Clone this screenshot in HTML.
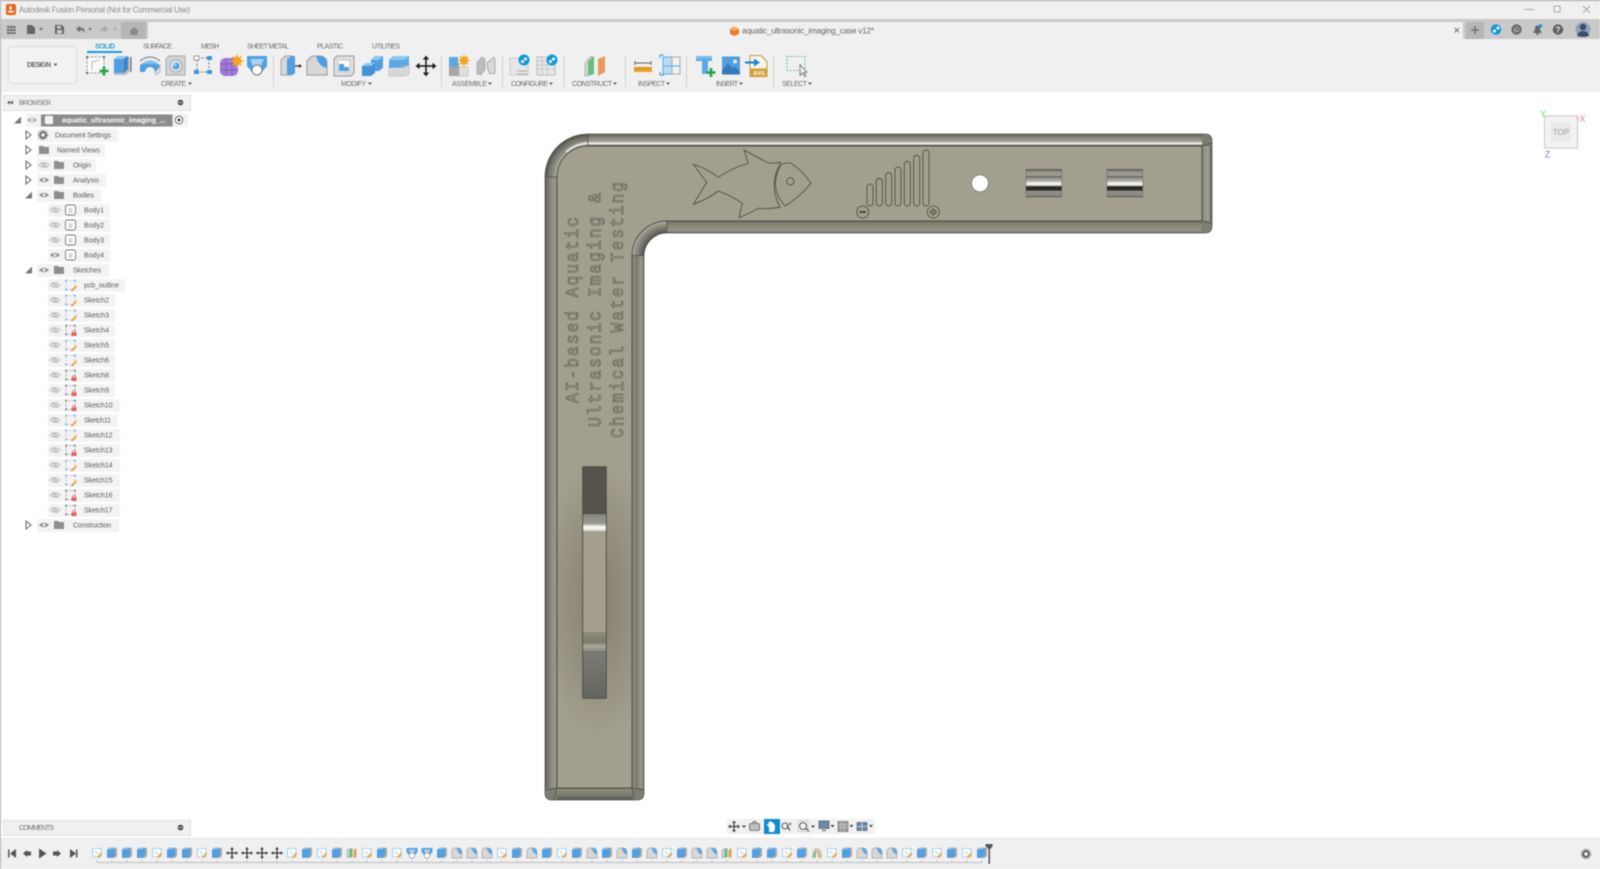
<!DOCTYPE html>
<html><head><meta charset="utf-8"><title>Autodesk Fusion</title>
<style>
html,body{margin:0;padding:0;background:#fff;width:1600px;height:869px;overflow:hidden}
svg{display:block;filter:blur(.45px);font-family:"Liberation Sans",sans-serif}
.t{font-size:7px;fill:#5c5c5c}
.l{font-size:7px;fill:#6e6e6e}
.m{font-family:"Liberation Mono",monospace;font-size:16.5px;fill:none;stroke:#504f47;stroke-width:.5}
</style></head><body>
<svg width="1600" height="869" viewBox="0 0 1600 869" xmlns="http://www.w3.org/2000/svg">
<defs>
<g id="eo" fill="none" stroke="#bcbcbc" stroke-width=".9"><path d="M-5 0Q0-4.5 5 0Q0 4.5-5 0Z"/><circle r="1.6"/><path d="M-3-3L3 3"/></g>
<g id="e1"><path d="M-5 0Q0-4.5 5 0Q0 4.5-5 0Z" fill="#8c8c8c"/><circle r="1.7" fill="#dcdcdc"/></g>
<path id="fo" d="M-5-4H-1L0-3H5V4H-5Z" fill="#8e8e8e"/>
<g id="bd"><rect x="-5" y="-5" width="10" height="10" rx="2" fill="#fff" stroke="#777" stroke-width=".9"/><rect x="-2" y="-2" width="4" height="5" fill="#d8d8d8"/></g>
<g id="sp"><rect x="-4.5" y="-4.5" width="9" height="9" fill="none" stroke="#a9b4bd" stroke-width=".6" stroke-dasharray="2 1"/><g fill="#4ea4ea"><rect x="-5.2" y="-5.2" width="1.5" height="1.5"/><rect x="3.7" y="-5.2" width="1.5" height="1.5"/><rect x="-5.2" y="3.700" width="1.5" height="1.5"/></g><path d="M2 5L6 1" stroke="#f0a020" stroke-width="1.6"/><path d="M2 5L1 6" stroke="#e04020" stroke-width="1"/></g>
<g id="sl"><rect x="-4.5" y="-4.5" width="9" height="9" fill="none" stroke="#8a8a8a" stroke-width=".6" stroke-dasharray="2 1"/><g fill="#666"><rect x="-5.2" y="-5.2" width="1.5" height="1.5"/><rect x="3.7" y="-5.2" width="1.5" height="1.5"/><rect x="-5.2" y="3.700" width="1.5" height="1.5"/></g><rect x="1" y="2.500" width="5" height="3.500" fill="#dc6460"/><path d="M2 2.500V1.500Q3.500-.5 5 1.500V2.500" fill="none" stroke="#dc6460" stroke-width=".8"/></g>
<path id="tc" d="M-2-4L3 0L-2 4Z" fill="#fff" stroke="#666" stroke-width="1"/>
<path id="to" d="M-3.500 3.500H3.500V-3.500Z" fill="#7a7a7a"/>
<!-- timeline icons -->
<g id="k"><rect x="-4.500" y="-4.500" width="8.500" height="8.500" fill="#fbfdff" stroke="#6fb4e8" stroke-width=".8" stroke-dasharray="2 .8"/><path d="M-2-2L1 1M-2 2H-1" stroke="#9ab4c8" stroke-width=".6"/><path d="M.5 4.500L4.500 .5" stroke="#f0a020" stroke-width="1.700"/></g>
<g id="x"><path d="M-5-2.500L-2.500-5H5V3L2.500 5H-5Z" fill="#a8a8a8"/><path d="M-5-3.500L-2.500-5.500H3V2.500L.5 4.500H-5Z" fill="#4f9fe2"/><path d="M-5-3.500L-2.500-5.500H3L.5-3.500Z" fill="#86c0ee"/></g>
<g id="f"><path d="M-5 5V-3L-3-5H1Q5-5 5 0V5Z" fill="#d8d8d8" stroke="#a2a2a2" stroke-width=".7"/><path d="M-.5-5H1Q5-5 5 0V1.500Q1.500 1.500-.5-5Z" fill="#5aa6e2"/></g>
<g id="m" fill="#333"><path d="M-.6-4H.6V4H-.6Z"/><path d="M-4-.6H4V.6H-4Z"/><path d="M0-6L-1.800-3.800H1.800Z"/><path d="M0 6L-1.800 3.800H1.800Z"/><path d="M-6 0L-3.800-1.800V1.800Z"/><path d="M6 0L3.800-1.800V1.800Z"/></g>
<g id="c"><path d="M-5-3L-1-5V3L-5 5Z" fill="#d0d0d0" stroke="#999" stroke-width=".5"/><path d="M-2.500-3L.5-5V4L-2.500 5Z" fill="#5fbf7f"/><path d="M1.500-3L4.500-5V4L1.500 5Z" fill="#e89a62"/></g>
<g id="o"><path d="M-5.500-5H5.500V-1L2 3H-2L-5.500-1Z" fill="#4f9fe2"/><path d="M-3.500-3.500H3.500L2 0H-2Z" fill="#a8d2f2"/><circle cy="2.500" r="2.800" fill="#fff" stroke="#8a8a8a" stroke-width=".7"/></g>
<g id="r"><path d="M-5 2Q-4-5 0-5Q4-5 5 2L3 4H1Q1 0 0 0Q-1 0-1 4H-3Z" fill="#d0c8b8"/><path d="M-5 4L-1-4V5H-5Z" fill="#6fbf86" opacity=".8"/><path d="M5 4L1-4V5H5Z" fill="#e8a070" opacity=".8"/></g>
<!-- model -->
<linearGradient id="gt" x1="0" y1="134" x2="0" y2="146" gradientUnits="userSpaceOnUse"><stop offset="0" stop-color="#4f4f49"/><stop offset=".12" stop-color="#706f67"/><stop offset=".4" stop-color="#8f8e84"/><stop offset=".66" stop-color="#a8a79d"/><stop offset=".74" stop-color="#f0efe8"/><stop offset=".85" stop-color="#ecebe4"/><stop offset=".92" stop-color="#77766c"/><stop offset="1" stop-color="#4c4b44"/></linearGradient>
<linearGradient id="gl" x1="545" y1="0" x2="557" y2="0" gradientUnits="userSpaceOnUse"><stop offset="0" stop-color="#565550"/><stop offset=".15" stop-color="#706f66"/><stop offset=".55" stop-color="#8e8d84"/><stop offset=".92" stop-color="#9c9b8e"/><stop offset="1" stop-color="#4c4b44"/></linearGradient>
<linearGradient id="gr" x1="632" y1="0" x2="644" y2="0" gradientUnits="userSpaceOnUse"><stop offset="0" stop-color="#4c4b44"/><stop offset=".08" stop-color="#8e8d80"/><stop offset=".42" stop-color="#7a796f"/><stop offset=".72" stop-color="#9a998f"/><stop offset=".92" stop-color="#8a897f"/><stop offset="1" stop-color="#55544c"/></linearGradient>
<linearGradient id="gb" x1="0" y1="221" x2="0" y2="233" gradientUnits="userSpaceOnUse"><stop offset="0" stop-color="#4c4b44"/><stop offset=".1" stop-color="#7d7a6d"/><stop offset=".45" stop-color="#8b8a7e"/><stop offset=".85" stop-color="#949388"/><stop offset="1" stop-color="#55544c"/></linearGradient>
<linearGradient id="ge" x1="1202" y1="0" x2="1212" y2="0" gradientUnits="userSpaceOnUse"><stop offset="0" stop-color="#4c4b44"/><stop offset=".1" stop-color="#8f8e84"/><stop offset=".65" stop-color="#9e9d94"/><stop offset=".9" stop-color="#6a6960"/><stop offset="1" stop-color="#4e4d46"/></linearGradient>
<linearGradient id="gf" x1="0" y1="788" x2="0" y2="800" gradientUnits="userSpaceOnUse"><stop offset="0" stop-color="#4c4b44"/><stop offset=".1" stop-color="#8c8b80"/><stop offset=".6" stop-color="#7c7b72"/><stop offset="1" stop-color="#55544c"/></linearGradient>
<linearGradient id="gs"  x1="0" y1="0" x2="0" y2="1"><stop offset="0" stop-color="#5c5b54"/><stop offset=".06" stop-color="#7d7c74"/><stop offset=".1" stop-color="#9a9990"/><stop offset=".24" stop-color="#9c9b92"/><stop offset=".27" stop-color="#55544d"/><stop offset=".3" stop-color="#8f8e86"/><stop offset=".42" stop-color="#aeada5"/><stop offset=".5" stop-color="#f8f8f3"/><stop offset=".58" stop-color="#e4e4dc"/><stop offset=".62" stop-color="#45443e"/><stop offset=".64" stop-color="#25241f"/><stop offset=".76" stop-color="#2f2e29"/><stop offset=".78" stop-color="#8f8e86"/><stop offset=".95" stop-color="#8a8981"/><stop offset="1" stop-color="#55544d"/></linearGradient>
<linearGradient id="s1" x1="0" y1="513" x2="0" y2="534" gradientUnits="userSpaceOnUse"><stop offset="0" stop-color="#36352f"/><stop offset=".08" stop-color="#888780"/><stop offset=".5" stop-color="#9a9992"/><stop offset=".66" stop-color="#fdfdf8"/><stop offset=".8" stop-color="#e8e8e0"/><stop offset=".9" stop-color="#9f9e90"/><stop offset="1" stop-color="#a39e8d"/></linearGradient>
<linearGradient id="s2" x1="0" y1="632" x2="0" y2="652" gradientUnits="userSpaceOnUse"><stop offset="0" stop-color="#908c7c"/><stop offset=".5" stop-color="#7c7969"/><stop offset=".7" stop-color="#a9a89d"/><stop offset=".95" stop-color="#8d8c84"/><stop offset="1" stop-color="#55544c"/></linearGradient>
<linearGradient id="s3" x1="0" y1="652" x2="0" y2="698" gradientUnits="userSpaceOnUse"><stop offset="0" stop-color="#7c7b76"/><stop offset="1" stop-color="#64645e"/></linearGradient>
<radialGradient id="sh" cx="598" cy="600" r="1" gradientUnits="userSpaceOnUse" gradientTransform="translate(598 600) scale(60 140) translate(-598 -600)"><stop offset="0" stop-color="#6e6958" stop-opacity=".6"/><stop offset="1" stop-color="#6e6958" stop-opacity="0"/></radialGradient>
<clipPath id="out"><path d="M552 800Q545 800 545 793V177A43 43 0 0 1 588 134H1205Q1212 134 1212 141V226Q1212 233 1205 233H667A23 23 0 0 0 644 256V793Q644 800 637 800Z"/></clipPath>
<path id="face" d="M557 788V177A31 31 0 0 1 588 146H1202V221H667A35 35 0 0 0 632 256V788Z"/>
</defs>

<!-- chrome -->
<rect width="1600" height="869" fill="#fff"/>
<rect width="1600" height="20" fill="#f0f0f0"/>
<rect width="1600" height="1" fill="#a2a2a2"/>
<rect y="19" width="1600" height="20" fill="#c9c9c9"/>
<rect x="148" y="22" width="1315" height="17" fill="#f0f0f0"/>
<rect x="121" y="22" width="25" height="17" fill="#b6b6b6"/>
<rect y="39" width="1600" height="53" fill="#f0f0f0"/>
<rect x="0" width="1" height="869" fill="#aaa"/>
<rect x="6" y="4" width="10" height="11" rx="2" fill="#e8641b"/><rect x="9.500" y="6" width="2" height="4" fill="#fff"/><rect x="8" y="11" width="6" height="1.500" fill="#fff"/>
<text x="19" y="12.500" font-size="8" fill="#8c8c8c" textLength="171">Autodesk Fusion Personal (Not for Commercial Use)</text>
<path d="M1524 9.500H1534" stroke="#a8a8a8"/><rect x="1554" y="6" width="6" height="6" fill="none" stroke="#a8a8a8"/><path d="M1583 6L1590 13M1590 6L1583 13" stroke="#a8a8a8"/>
<!-- QAT -->
<g fill="#666"><rect x="7" y="26" width="2.500" height="2"/><rect x="10" y="26" width="2.500" height="2"/><rect x="13" y="26" width="2.500" height="2"/><rect x="7" y="29" width="2.500" height="2"/><rect x="10" y="29" width="2.500" height="2"/><rect x="13" y="29" width="2.500" height="2"/><rect x="7" y="32" width="2.500" height="2"/><rect x="10" y="32" width="2.500" height="2"/><rect x="13" y="32" width="2.500" height="2"/></g>
<path d="M27 25H32L35 28V34H27Z" fill="#666"/><path d="M39 28H43L41 30.500Z" fill="#666"/>
<path d="M55 25H62L64 27V34H55Z" fill="#666"/><rect x="57" y="26" width="4" height="2.500" fill="#ccc"/><rect x="57" y="30" width="5" height="3.500" fill="#ccc"/>
<path d="M76 29L80 25.500V27.500Q85 27.500 85 33Q83 30 80 30.500V32.500Z" fill="#777"/><path d="M88 28H92L90 30.500Z" fill="#777"/>
<path d="M108 29L104 25.500V27.500Q100 27.500 100 33Q102 30 104 30.500V32.500Z" fill="#aaa"/><path d="M113 28H117L115 30.500Z" fill="#aaa"/>
<path d="M134 27L129 31.500H130.500V35H137.500V31.500H139Z" fill="#888"/>
<!-- doc title -->
<path d="M734 26.500L739 29V34L734 36L730 34V29Z" fill="#ec7a2d"/><path d="M730 29L734 26.500L739 29L734 31Z" fill="#f5a66b"/>
<text x="742" y="33.500" font-size="8.200" fill="#666" textLength="132">aquatic_ultrasonic_imaging_case v12*</text>
<path d="M1454.500 28L1459 32.500M1459 28L1454.500 32.500" stroke="#777" stroke-width="1"/>
<rect x="1466" y="22" width="18" height="17" fill="#b6b6b6"/><path d="M1471 30H1479M1475 26V34" stroke="#707070" stroke-width="1.500"/>
<circle cx="1496" cy="29.500" r="5.200" fill="#0f98d8"/><circle cx="1494.500" cy="31" r="1.500" fill="#fff"/><circle cx="1498" cy="28" r="1.500" fill="#fff"/>
<circle cx="1516.500" cy="29.500" r="5.200" fill="#6a6a6a"/><circle cx="1516.500" cy="29.500" r="3" fill="#9a9a9a"/><path d="M1516.500 27.500V29.500H1518.500" stroke="#444" fill="none" stroke-width=".8"/>
<path d="M1533 33Q1535 31 1535 28Q1535 25.500 1537.500 25.500Q1540 25.500 1540 28Q1540 31 1542 33Z" fill="#666"/><circle cx="1537.500" cy="34" r="1.200" fill="#666"/><circle cx="1540.500" cy="26" r="1.700" fill="#0f98d8"/>
<circle cx="1558" cy="29.500" r="5.200" fill="#606060"/><text x="1558" y="32.500" font-size="8" font-weight="bold" fill="#eee" text-anchor="middle">?</text>
<circle cx="1583" cy="29.500" r="7.500" fill="#8fa3bb"/><circle cx="1583" cy="27" r="3.200" fill="#3f4c62"/><path d="M1577 36Q1578 31 1583 31Q1588 31 1589 36Q1583 38 1577 36Z" fill="#3f4c62"/>

<!-- design button & tabs -->
<rect x="8.500" y="46.500" width="68" height="37" rx="3" fill="#f2f2f2" stroke="#dcdcdc"/>
<text x="27" y="67" font-size="7" font-weight="bold" fill="#666" textLength="24">DESIGN</text><path d="M53.500 63.500H57.500L55.500 66Z" fill="#555"/>
<text x="95" y="48.500" font-size="7" font-weight="bold" fill="#2c9fd9" textLength="20">SOLID</text>
<rect x="87" y="51" width="35" height="2" fill="#1a9ad6"/>
<text class="l" x="143" y="48.500" textLength="29">SURFACE</text>
<text class="l" x="201" y="48.500" textLength="18">MESH</text>
<text class="l" x="247" y="48.500" textLength="42">SHEET METAL</text>
<text class="l" x="317" y="48.500" textLength="26">PLASTIC</text>
<text class="l" x="372" y="48.500" textLength="28">UTILITIES</text>
<!-- labels -->
<text class="l" x="161" y="86" textLength="25">CREATE</text><path d="M188 82.500H192L190 85Z" fill="#666"/>
<text class="l" x="341" y="86" textLength="25">MODIFY</text><path d="M368 82.500H372L370 85Z" fill="#666"/>
<text class="l" x="452" y="86" textLength="35">ASSEMBLE</text><path d="M488 82.500H492L490 85Z" fill="#666"/>
<text class="l" x="511" y="86" textLength="37">CONFIGURE</text><path d="M549 82.500H553L551 85Z" fill="#666"/>
<text class="l" x="572" y="86" textLength="40">CONSTRUCT</text><path d="M613 82.500H617L615 85Z" fill="#666"/>
<text class="l" x="638" y="86" textLength="27">INSPECT</text><path d="M666 82.500H670L668 85Z" fill="#666"/>
<text class="l" x="716" y="86" textLength="22">INSERT</text><path d="M739 82.500H743L741 85Z" fill="#666"/>
<text class="l" x="782" y="86" textLength="25">SELECT</text><path d="M808 82.500H812L810 85Z" fill="#666"/>
<g stroke="#d0d0d0"><path d="M273.500 56V87M441.500 56V87M502.500 56V87M564 56V87M625.500 56V87M686.500 56V87M773.500 56V87"/></g>

<!-- toolbar icons -->
<g transform="translate(96 65)"><rect x="-9" y="-8" width="17" height="16" fill="#f8f8f8" stroke="#888" stroke-width=".8" stroke-dasharray="2.500 1.200"/><path d="M-4 5V-3L3-5" fill="none" stroke="#bbb"/><g fill="#666"><rect x="-10" y="-9" width="2" height="2"/><rect x="7" y="-9" width="2" height="2"/><rect x="-10" y="7" width="2" height="2"/></g><path d="M8 1.500V10.500M3.500 6H12.500" stroke="#21a44a" stroke-width="2.600"/></g>
<g transform="translate(122 65)"><path d="M-8-4L-4-8H8V6L4 10H-8Z" fill="#bbb"/><path d="M-8-6L-4-9H6V4L2 8H-8Z" fill="#4f9fe2"/><path d="M-8-6L-4-9H6L2-6Z" fill="#8ec6f0"/><path d="M2-6L6-9V4L2 8Z" fill="#3a82c4"/><path d="M9-8V7" stroke="#555"/></g>
<g transform="translate(150 65)"><path d="M-10-4Q0-12 10-4" fill="none" stroke="#777" stroke-width="1"/><path d="M-10 0Q0-9 10 0L10 7H5Q4 2 0 2Q-4 2-5 7H-10Z" fill="#4f9fe2"/><path d="M-10 0Q0-8 10 0Q0-3-10 0Z" fill="#8ec6f0"/><path d="M5 7L10 1V7L6 10Z" fill="#ddd" stroke="#888" stroke-width=".5"/></g>
<g transform="translate(176 66)"><path d="M-10-7L-7-10H9V9H-10Z" fill="#d4d4d4" stroke="#a8a8a8"/><circle r="6" fill="#eee" stroke="#a0a0a0"/><circle r="3.800" fill="#5aa6e2"/><path d="M0 0V-3.800A3.800 3.800 0 0 0-3.800 0Z" fill="#9bcdf2"/></g>
<g transform="translate(203 65)"><path d="M-6-7H6V7H-6V-7" fill="none" stroke="#888" stroke-dasharray="2.500 1.500"/><rect x="-9" y="-9" width="5" height="4" fill="#fff" stroke="#777" stroke-width=".7"/><rect x="4" y="-9" width="5" height="4" fill="#3d94dc"/><rect x="-9" y="5" width="5" height="4" fill="#3d94dc"/><rect x="4" y="5" width="5" height="4" fill="#3d94dc"/></g>
<g transform="translate(230 67)"><rect x="-10" y="-9" width="18" height="18" rx="5" fill="#a07ad8"/><path d="M-10-3H8M-10 3H8M-4-9V9M2-9V9" stroke="#7a52b8" stroke-width=".7"/><path d="M7-13L8.500-9.500L12-11L10.500-7.500L14-6L10.500-4.500L12-1L8.500-2.500L7 1L5.500-2.500L2-1L3.500-4.500L0-6L3.500-7.500L2-11L5.500-9.500Z" fill="#f2a81c"/></g>
<g transform="translate(257 65)"><path d="M-10-9H10V1L5 7H-5L-10 1Z" fill="#4f9fe2"/><path d="M-7-6H7L4 1H-4Z" fill="#a8d2f2"/><circle cy="5" r="5" fill="#fff" stroke="#777"/></g>
<g transform="translate(290 66)"><path d="M-9-6L-5-10H2V9H-9Z" fill="#d8d8d8" stroke="#888" stroke-width=".7"/><path d="M-3-7L2-10H5V8L-3 9Z" fill="#4f9fe2"/><path d="M5 0H10" stroke="#333" stroke-width="1.200"/><path d="M12 0L9-2V2Z" fill="#333"/></g>
<g transform="translate(317 66)"><path d="M-10 9V-5L-5-10H2Q10-10 10-2V9Z" fill="#d8d8d8" stroke="#999"/><path d="M-1-10H2Q10-10 10-2V2Q2 1-1-10Z" fill="#4f9fe2"/></g>
<g transform="translate(344 66)"><path d="M-10-7L-7-10H10V7L7 10H-10Z" fill="#e0e0e0" stroke="#999"/><rect x="-6" y="-6" width="12" height="12" fill="#fafafa" stroke="#aaa" stroke-width=".6"/><path d="M-5 5V-2H0V1H5V5Z" fill="#4f9fe2"/></g>
<g transform="translate(372 66)"><path d="M-1-6L3-10H11V2L7 5H-1Z" fill="#4f9fe2"/><path d="M-1-6L3-10H11L7-6Z" fill="#8ec6f0"/><path d="M-10 0L-6-3H3V7L-1 10H-10Z" fill="#4592d8"/><path d="M-10 0L-6-3H3L-1 0Z" fill="#8ec6f0"/></g>
<g transform="translate(399 66)"><path d="M-10-6L-6-10H10V-1L7 2H-10Z" fill="#5aa9e6"/><path d="M-10-6L-6-10H10L6-6Z" fill="#8ec6f0"/><path d="M-10 1H-2L10-2V8L6 10H-10Z" fill="#d8d8d8" stroke="#aaa" stroke-width=".5"/><path d="M-10 1H4L10-2" stroke="#4f9fe2" fill="none" stroke-width="1.200"/></g>
<g transform="translate(426 66)" fill="#222"><path d="M-.8-7H.8V7H-.8Z"/><path d="M-7-.8H7V.8H-7Z"/><path d="M0-10.500L-3.200-6.500H3.200Z"/><path d="M0 10.500L-3.200 6.500H3.200Z"/><path d="M-10.500 0L-6.500-3.200V3.200Z"/><path d="M10.500 0L6.500-3.200V3.200Z"/></g>
<g transform="translate(459 66)"><path d="M-10-1L-7-3H0V10H-10Z" fill="#8b9aa8"/><path d="M-10 1H0V10H-10Z" fill="#a6a6a6"/><path d="M0 1H9V10H0Z" fill="#dedede" stroke="#aaa" stroke-width=".5"/><path d="M-10-9H-1V0H-10Z" fill="#5aa9e6"/><path d="M5-12L6.200-8.800L9.500-10L8.200-6.800L11.500-5.500L8.200-4.200L9.500-1L6.200-2.200L5 1L3.800-2.200L.5-1L1.800-4.200L-1.500-5.500L1.800-6.800L.5-10L3.800-8.800Z" fill="#f2a81c"/></g>
<g transform="translate(486 66)"><path d="M-9 8L-9-4L-4-9L-1-7V4L-5 9Z" fill="#bcbcbc" stroke="#888" stroke-width=".5"/><path d="M1-3L8-9L9-6V7L4 8L2 4Z" fill="#d8d8d8" stroke="#888" stroke-width=".6"/></g>
<g transform="translate(519 66)"><path d="M-9-8H3L9-2V9H-9Z" fill="#e6e6e6" stroke="#ccc"/><path d="M-2 5H8M-2 8H8" stroke="#aaa"/><circle cx="5" cy="-6" r="5.500" fill="#0f98d8"/><circle cx="3.500" cy="-4.500" r="1.500" fill="#fff"/><circle cx="6.500" cy="-7" r="1.500" fill="#fff"/></g>
<g transform="translate(546 66)"><rect x="-9" y="-9" width="18" height="18" fill="#e8e8e8" stroke="#bbb"/><path d="M-9-5H9M-9-1H9M-9 3H9M-4-9V9M1-9V9" stroke="#bbb" stroke-width=".7"/><circle cx="6" cy="-6" r="5.500" fill="#0f98d8"/><circle cx="4.500" cy="-4.500" r="1.500" fill="#fff"/><circle cx="7.500" cy="-7" r="1.500" fill="#fff"/></g>
<g transform="translate(595 66)"><path d="M-10-3L-6-8L-3-10V8L-8 10H-10Z" fill="#d6d6d6" stroke="#888" stroke-width=".5"/><path d="M-7-5L-1-10V8L-7 10Z" fill="#64bf7e"/><path d="M3-7L10-10V6L3 10Z" fill="#e8995f"/></g>
<g transform="translate(643 65)"><path d="M-8-4V0M8-4V0M-8-2H8" stroke="#666" fill="none"/><rect x="-9" y="2" width="18" height="5" fill="#eea020"/><path d="M-7 2V4M-4 2V4M-1 2V4M2 2V4M5 2V4" stroke="#9a6a10" stroke-width=".6"/></g>
<g transform="translate(670 65)"><rect x="-7" y="-8" width="9" height="17" fill="#bcdcf4" stroke="#5aa9e6"/><rect x="2" y="-8" width="8" height="17" fill="#f2f2f2" stroke="#aaa"/><path d="M-7 1H10" stroke="#5aa9e6"/><path d="M-10-7V-10H-6M-10 7V10H-6" fill="none" stroke="#3d94dc"/></g>
<g transform="translate(705 65)"><path d="M-9-9H7V-4H3V9H-3V-4H-9Z" fill="#5aa9e6"/><path d="M-9-9H7V-6H-9Z" fill="#7abcec"/><path d="M6 3V12M1.500 7.500H10.500" stroke="#21a44a" stroke-width="2.600"/></g>
<g transform="translate(731 65.500)"><rect x="-9" y="-9" width="18" height="18" fill="#4f9fe2"/><path d="M-9 9V5L-3-2L2 3L4 1L9 6V9Z" fill="#3479b8"/><circle cx="4" cy="-4" r="2" fill="#f3e9b0"/></g>
<g transform="translate(757 65.500)"><path d="M-7-10H4L10-4V11H-7Z" fill="#f8f4e8" stroke="#c79a40"/><rect x="-7" y="3" width="17" height="8" fill="#d4a032"/><text x="2" y="9.500" font-size="5.500" font-weight="bold" fill="#fff" text-anchor="middle">SVG</text><path d="M-12-3H-2" stroke="#1a87e0" stroke-width="2.200"/><path d="M3-3L-3-7V1Z" fill="#1a87e0"/></g>
<g transform="translate(796 65.500)"><rect x="-9" y="-9" width="18" height="14" fill="none" stroke="#69c184" stroke-dasharray="2 1.500"/><path d="M4-1V10L6.500 7.500L8.500 11L10 10.200L8 6.800H11Z" fill="#eee" stroke="#555" stroke-width=".7"/></g>

<!-- browser -->
<rect x="3.500" y="95.500" width="187" height="15" fill="#f0f0f0" stroke="#e0e0e0"/>
<path d="M7 102.500L10 100.500V104.500Z M10 102.500L13 100.500V104.500Z" fill="#555"/>
<text x="19" y="105" font-size="7" fill="#777" textLength="32">BROWSER</text>
<circle cx="180.500" cy="102.500" r="2.800" fill="#444"/><rect x="178.500" y="102" width="4" height="1" fill="#ccc"/>

<rect x="26" y="114" width="162" height="13" fill="#f2f2f2"/>
<use href="#to" x="17.500" y="120"/>
<use href="#e1" x="32" y="120" opacity=".7"/>
<rect x="41" y="114.500" width="131.500" height="12" fill="#8c8c8c"/>
<rect x="44.500" y="115.500" width="9" height="9" rx="2" fill="#f4f4f4" stroke="#777" stroke-width=".6"/>
<text x="62" y="122.500" font-size="7" font-weight="bold" fill="#fff" textLength="104">aquatic_ultrasonic_imaging_...</text>
<circle cx="179" cy="120" r="3.800" fill="#fff" stroke="#555" stroke-width=".8"/><circle cx="179" cy="120" r="1.500" fill="#444"/>

<g fill="#f3f3f3">
<rect x="37" y="129" width="81" height="13"/><rect x="37" y="144" width="68" height="13"/><rect x="37" y="159" width="59" height="13"/><rect x="37" y="174" width="69" height="13"/><rect x="37" y="189" width="64" height="13"/>
<rect x="48" y="204" width="62" height="13"/><rect x="48" y="219" width="62" height="13"/><rect x="48" y="234" width="62" height="13"/><rect x="48" y="249" width="62" height="13"/>
<rect x="37" y="264" width="72" height="13"/><rect x="48" y="279" width="77" height="13"/>
<rect x="48" y="294" width="67" height="13"/><rect x="48" y="309" width="67" height="13"/><rect x="48" y="324" width="67" height="13"/><rect x="48" y="339" width="67" height="13"/><rect x="48" y="354" width="67" height="13"/><rect x="48" y="369" width="67" height="13"/><rect x="48" y="384" width="67" height="13"/>
<rect x="48" y="399" width="72" height="13"/><rect x="48" y="414" width="70" height="13"/><rect x="48" y="429" width="72" height="13"/><rect x="48" y="444" width="72" height="13"/><rect x="48" y="459" width="72" height="13"/><rect x="48" y="474" width="72" height="13"/><rect x="48" y="489" width="72" height="13"/><rect x="48" y="504" width="72" height="13"/>
<rect x="37" y="519" width="82" height="13"/>
</g>
<use href="#tc" x="28" y="135"/><use href="#tc" x="28" y="150"/><use href="#tc" x="28" y="165"/><use href="#tc" x="28" y="180"/><use href="#to" x="28.500" y="195"/><use href="#to" x="28.500" y="270"/><use href="#tc" x="28" y="525"/>
<circle cx="43" cy="135" r="2.800" fill="none" stroke="#666" stroke-width="1.800"/><circle cx="43" cy="135" r="4.500" fill="none" stroke="#666" stroke-width="1" stroke-dasharray="1.400 1.300"/>
<use href="#fo" x="44" y="150"/>
<use href="#eo" x="44" y="165"/><use href="#fo" x="59" y="165"/>
<use href="#e1" x="44" y="180"/><use href="#fo" x="59" y="180"/>
<use href="#e1" x="44" y="195"/><use href="#fo" x="59" y="195"/>
<use href="#eo" x="55" y="210"/><use href="#bd" x="70.500" y="210"/>
<use href="#eo" x="55" y="225"/><use href="#bd" x="70.500" y="225"/>
<use href="#eo" x="55" y="240"/><use href="#bd" x="70.500" y="240"/>
<use href="#e1" x="55" y="255"/><use href="#bd" x="70.500" y="255"/>
<use href="#e1" x="44" y="270"/><use href="#fo" x="59" y="270"/>
<use href="#eo" x="55" y="285"/><use href="#sp" x="70.500" y="285"/>
<use href="#eo" x="55" y="300"/><use href="#sp" x="70.500" y="300"/>
<use href="#eo" x="55" y="315"/><use href="#sp" x="70.500" y="315"/>
<use href="#eo" x="55" y="330"/><use href="#sl" x="70.500" y="330"/>
<use href="#eo" x="55" y="345"/><use href="#sp" x="70.500" y="345"/>
<use href="#eo" x="55" y="360"/><use href="#sp" x="70.500" y="360"/>
<use href="#eo" x="55" y="375"/><use href="#sl" x="70.500" y="375"/>
<use href="#eo" x="55" y="390"/><use href="#sl" x="70.500" y="390"/>
<use href="#eo" x="55" y="405"/><use href="#sl" x="70.500" y="405"/>
<use href="#eo" x="55" y="420"/><use href="#sp" x="70.500" y="420"/>
<use href="#eo" x="55" y="435"/><use href="#sp" x="70.500" y="435"/>
<use href="#eo" x="55" y="450"/><use href="#sl" x="70.500" y="450"/>
<use href="#eo" x="55" y="465"/><use href="#sp" x="70.500" y="465"/>
<use href="#eo" x="55" y="480"/><use href="#sp" x="70.500" y="480"/>
<use href="#eo" x="55" y="495"/><use href="#sl" x="70.500" y="495"/>
<use href="#eo" x="55" y="510"/><use href="#sl" x="70.500" y="510"/>
<use href="#e1" x="44" y="525"/><use href="#fo" x="59" y="525"/>

<text class="t" x="55" y="137.500" textLength="56">Document Settings</text>
<text class="t" x="57" y="152.500" textLength="43">Named Views</text>
<text class="t" x="73" y="167.500" textLength="18">Origin</text>
<text class="t" x="73" y="182.500" textLength="26">Analysis</text>
<text class="t" x="73" y="197.500" textLength="21">Bodies</text>
<text class="t" x="84" y="212.500" textLength="20">Body1</text>
<text class="t" x="84" y="227.500" textLength="20">Body2</text>
<text class="t" x="84" y="242.500" textLength="20">Body3</text>
<text class="t" x="84" y="257.500" textLength="20">Body4</text>
<text class="t" x="73" y="272.500" textLength="28">Sketches</text>
<text class="t" x="84" y="287.500" textLength="35">pcb_outline</text>
<text class="t" x="84" y="302.500" textLength="25">Sketch2</text>
<text class="t" x="84" y="317.500" textLength="25">Sketch3</text>
<text class="t" x="84" y="332.500" textLength="25">Sketch4</text>
<text class="t" x="84" y="347.500" textLength="25">Sketch5</text>
<text class="t" x="84" y="362.500" textLength="25">Sketch6</text>
<text class="t" x="84" y="377.500" textLength="25">Sketch8</text>
<text class="t" x="84" y="392.500" textLength="25">Sketch9</text>
<text class="t" x="84" y="407.500" textLength="28.500">Sketch10</text>
<text class="t" x="84" y="422.500" textLength="27">Sketch11</text>
<text class="t" x="84" y="437.500" textLength="28.500">Sketch12</text>
<text class="t" x="84" y="452.500" textLength="28.500">Sketch13</text>
<text class="t" x="84" y="467.500" textLength="28.500">Sketch14</text>
<text class="t" x="84" y="482.500" textLength="28.500">Sketch15</text>
<text class="t" x="84" y="497.500" textLength="28.500">Sketch16</text>
<text class="t" x="84" y="512.500" textLength="28.500">Sketch17</text>
<text class="t" x="73" y="527.500" textLength="38">Construction</text>

<!-- MODEL -->
<g clip-path="url(#out)">
<use href="#face" fill="none" stroke="#4d4c45" stroke-width="24" stroke-linejoin="miter"/>
<use href="#face" fill="none" stroke="#66655d" stroke-width="21.500"/>
<use href="#face" fill="none" stroke="#7a796f" stroke-width="17"/>
<use href="#face" fill="none" stroke="#8e8d82" stroke-width="11"/>
<use href="#face" fill="none" stroke="#a8a79c" stroke-width="5"/>
<path d="M566 152Q575 144 588 143" fill="none" stroke="#e6e5de" stroke-width="2"/>
<rect x="588" y="134" width="614" height="12" fill="url(#gt)"/>
<rect x="545" y="177" width="12" height="611" fill="url(#gl)"/>
<rect x="632" y="256" width="12" height="532" fill="url(#gr)"/>
<rect x="667" y="221" width="535" height="12" fill="url(#gb)"/>
<rect x="1202" y="140" width="10" height="88" fill="url(#ge)"/>
<rect x="552" y="788" width="85" height="12" fill="url(#gf)"/>
<path d="M545 788H557V800H545ZM632 788H644V800H632ZM1202 134H1212V146H1202ZM1202 221H1212V233H1202Z" fill="#7e7d73"/>
</g>
<use href="#face" fill="#a39f8f"/>
<path d="M557 440H632V780H557Z" fill="url(#sh)"/>
<use href="#face" fill="none" stroke="#4c4b44" stroke-width=".9"/>
<path d="M545 177H557M588 134V146M667 221V233M632 255.500H644M557 788L554 800M632 788L634 800M545 790L557 788M644 790L632 788M1202 146L1212 143M1202 221L1212 223" stroke="#4c4b44" stroke-width=".7" fill="none"/>
<path d="M552 800Q545 800 545 793V177A43 43 0 0 1 588 134H1205Q1212 134 1212 141V226Q1212 233 1205 233H667A23 23 0 0 0 644 256V793Q644 800 637 800Z" fill="none" stroke="#5a5950" stroke-width=".8"/>

<!-- engraved text -->
<text class="m" transform="translate(578 403) rotate(-90) scale(1 1.100)" textLength="186">AI-based Aquatic</text>
<text class="m" transform="translate(600.500 427) rotate(-90) scale(1 1.100)" textLength="234">Ultrasonic Imaging &amp;</text>
<text class="m" transform="translate(623 438) rotate(-90) scale(1 1.100)" textLength="256">Chemical Water Testing</text>

<!-- fish -->
<g fill="none" stroke="#47463f" stroke-width=".8">
<path d="M693.300 164.300L706.700 182.500L693.300 204.300Q708 199 718.300 191Q732 196 742.300 203.300L739 217.700Q750 213 758.300 208.300Q770 209 780 207.300Q768 185 780.700 162.300Q772 164 766.700 162.300L744 150L748.300 163.300Q732 168 718.300 177.300Q706 168 693.300 164.300Z"/>
<path d="M781 165Q786 162 791 163.300Q802 170 811 183.300Q800 197 785 206Q768 187 781 165Z"/>
<circle cx="790.300" cy="181.300" r="3.700"/>
<rect x="867" y="184" width="6" height="22" rx="3"/>
<rect x="876.300" y="178.300" width="6" height="27.700" rx="3"/>
<rect x="885.700" y="172.700" width="6" height="33.300" rx="3"/>
<rect x="895" y="167" width="6" height="39" rx="3"/>
<rect x="904.300" y="161.300" width="6" height="44.700" rx="3"/>
<rect x="913.700" y="155.300" width="6" height="50.700" rx="3"/>
<rect x="923" y="150" width="6" height="56" rx="3"/>
<circle cx="862.700" cy="212" r="6"/><circle cx="933.300" cy="212" r="6"/>
</g>
<path d="M859.500 212H866" stroke="#47463f" stroke-width="2"/><path d="M933.300 209L936.300 212L933.300 215L930.300 212Z" fill="none" stroke="#47463f" stroke-width="1"/><circle cx="933.300" cy="212" r=".8" fill="#47463f"/>
<circle cx="980" cy="183.300" r="8.500" fill="#fff" stroke="#55544c" stroke-width=".6"/>
<rect x="1026" y="169.300" width="35.700" height="27.700" fill="url(#gs)" stroke="#5a5951" stroke-width=".4"/>
<rect x="1107" y="169.300" width="35.700" height="27.700" fill="url(#gs)" stroke="#5a5951" stroke-width=".4"/>
<!-- long slot -->
<rect x="582.700" y="466.700" width="23.600" height="46.300" fill="#55534b"/>
<rect x="582.700" y="513" width="23.600" height="21" fill="url(#s1)"/>
<rect x="582.700" y="534" width="23.600" height="98" fill="#a39e8d"/>
<rect x="582.700" y="632" width="23.600" height="20" fill="url(#s2)"/>
<rect x="582.700" y="652" width="23.600" height="46.300" fill="url(#s3)"/>
<rect x="582.700" y="466.700" width="23.600" height="231.600" fill="none" stroke="#45443d" stroke-width=".8"/>

<!-- viewcube -->
<rect x="1544.500" y="116" width="33" height="32" fill="#f3f3f3" stroke="#c6c6c6"/>
<rect x="1551" y="122" width="20" height="20" fill="#e9e9e9"/>
<text x="1561" y="135" font-size="8" fill="#9c9c9c" text-anchor="middle">TOP</text>
<text x="1543" y="117" font-size="9" fill="#6fdc6f" text-anchor="middle">Y</text>
<text x="1582.500" y="122" font-size="9" fill="#f27a7a" text-anchor="middle">X</text>
<path d="M1577 118.500H1579" stroke="#f27a7a"/>
<text x="1547.500" y="157.500" font-size="9" fill="#7a7aee" text-anchor="middle">Z</text>

<!-- comments -->
<rect x="3.500" y="820.500" width="187" height="15" fill="#f0f0f0" stroke="#e0e0e0"/>
<text x="19" y="830" font-size="7" fill="#777" textLength="35">COMMENTS</text>
<circle cx="180.500" cy="827.500" r="2.800" fill="#444"/><rect x="178.500" y="827" width="4" height="1" fill="#ccc"/>

<!-- viewport nav -->
<rect x="727" y="819" width="148" height="15" fill="#f1f1f1"/>
<rect x="764" y="819" width="16" height="15" fill="#0a8bd4"/>
<g transform="translate(734 826.500)" fill="#444"><path d="M-5-.6H5V.6H-5ZM-.6-5H.6V5H-.6Z"/><path d="M0-6L-2-3.500H2ZM0 6L-2 3.500H2ZM-6 0L-3.500-2V2ZM6 0L3.500-2V2Z"/></g><path d="M742 825.500H746L744 828Z" fill="#444"/>
<g transform="translate(754.500 826.500)"><rect x="-5" y="-3" width="10" height="7" rx="1.500" fill="#c0c0c0" stroke="#666" stroke-width=".8"/><path d="M-2-3L-1-5H1L2-3" fill="none" stroke="#666"/></g>
<path d="M769 832V827L767 825V824L768.500 824.500V822H769.500L770 821H771V822H772.500V823H774V824.500L775 825V829L774 832Z" fill="#fff"/>
<g transform="translate(786 826.500)" fill="none" stroke="#555"><circle cx="-1" cy="-.5" r="3"/><path d="M1-1L4 4" stroke-width="1.300"/><path d="M4-4V-1M2.500-2.500H5.500" stroke-width=".7"/></g>
<g transform="translate(803 826.500)" fill="none" stroke="#555"><circle cy="-.5" r="3.500"/><path d="M3 2L6 5" stroke-width="1.300"/><rect x="-5" y="-6" width="10" height="11" stroke="#aaa" stroke-dasharray="1.500 1" stroke-width=".7"/></g><path d="M811 825.500H815L813 828Z" fill="#444"/>
<g transform="translate(824 826)"><rect x="-5" y="-5" width="10" height="7.500" fill="#6a8aa8" stroke="#555" stroke-width=".7"/><path d="M-2 4.500H2" stroke="#666" stroke-width="1.200"/></g><path d="M830.500 825H834.500L832.500 827.500Z" fill="#444"/>
<g transform="translate(843 826.500)"><rect x="-5" y="-5" width="10" height="10" fill="#999" stroke="#666" stroke-width=".6"/><path d="M-5-2H5M-5 1H5M-2-5V5M1-5V5" stroke="#ddd" stroke-width=".5"/></g><path d="M849.500 825H853.500L851.500 827.500Z" fill="#444"/>
<g transform="translate(862 826.500)"><rect x="-5" y="-4" width="10" height="8" fill="#5f86ad" stroke="#555" stroke-width=".6"/><path d="M0-4V4M-5 0H5" stroke="#e8e8e8" stroke-width=".8"/></g><path d="M869 825H873L871 827.500Z" fill="#444"/>

<!-- timeline -->
<rect y="838" width="1600" height="31" fill="#f0f0f0"/>
<rect y="838" width="1600" height="1" fill="#e6e6e6"/>
<rect x="0" y="838" width="1" height="31" fill="#aaa"/>
<g fill="#555"><path d="M8 849.500H9.500V857.500H8ZM16 849V858L10 853.500Z"/><path d="M23 853.500L27 850V857ZM27 851.500H31V855.500H27Z"/><path d="M39 848.500L46.500 853.500L39 858.500Z"/><path d="M61 853.500L57 850V857ZM53 851.500H57V855.500H53Z"/><path d="M70 849L76 853.500L70 858ZM76 849.500H77.500V857.500H76Z"/></g>
<path d="M97 862.500H982" stroke="#c4c4c4" stroke-width="1.200"/>
<path stroke="#bdbdbd" stroke-width=".8" d="M97 860V862M112 860V862M127 860V862M142 860V862M157 860V862M172 860V862M187 860V862M202 860V862M217 860V862M232 860V862M247 860V862M262 860V862M277 860V862M292 860V862M307 860V862M322 860V862M337 860V862M352 860V862M367 860V862M382 860V862M397 860V862M412 860V862M427 860V862M442 860V862M457 860V862M472 860V862M487 860V862M502 860V862M517 860V862M532 860V862M547 860V862M562 860V862M577 860V862M592 860V862M607 860V862M622 860V862M637 860V862M652 860V862M667 860V862M682 860V862M697 860V862M712 860V862M727 860V862M742 860V862M757 860V862M772 860V862M787 860V862M802 860V862M817 860V862M832 860V862M847 860V862M862 860V862M877 860V862M892 860V862M907 860V862M922 860V862M937 860V862M952 860V862M967 860V862M982 860V862"/>
<use href="#k" x="97" y="853"/><use href="#x" x="112" y="853"/><use href="#x" x="127" y="853"/><use href="#x" x="142" y="853"/><use href="#k" x="157" y="853"/><use href="#x" x="172" y="853"/><use href="#x" x="187" y="853"/><use href="#k" x="202" y="853"/><use href="#x" x="217" y="853"/><use href="#m" x="232" y="853"/><use href="#m" x="247" y="853"/><use href="#m" x="262" y="853"/><use href="#m" x="277" y="853"/><use href="#k" x="292" y="853"/><use href="#x" x="307" y="853"/><use href="#k" x="322" y="853"/><use href="#x" x="337" y="853"/><use href="#c" x="352" y="853"/><use href="#k" x="367" y="853"/><use href="#x" x="382" y="853"/><use href="#k" x="397" y="853"/><use href="#o" x="412" y="853"/><use href="#o" x="427" y="853"/><use href="#x" x="442" y="853"/><use href="#f" x="457" y="853"/><use href="#f" x="472" y="853"/><use href="#f" x="487" y="853"/><use href="#k" x="502" y="853"/><use href="#x" x="517" y="853"/><use href="#f" x="532" y="853"/><use href="#x" x="547" y="853"/><use href="#k" x="562" y="853"/><use href="#x" x="577" y="853"/><use href="#f" x="592" y="853"/><use href="#x" x="607" y="853"/><use href="#f" x="622" y="853"/><use href="#x" x="637" y="853"/><use href="#f" x="652" y="853"/><use href="#k" x="667" y="853"/><use href="#x" x="682" y="853"/><use href="#f" x="697" y="853"/><use href="#f" x="712" y="853"/><use href="#c" x="727" y="853"/><use href="#k" x="742" y="853"/><use href="#x" x="757" y="853"/><use href="#x" x="772" y="853"/><use href="#k" x="787" y="853"/><use href="#x" x="802" y="853"/><use href="#r" x="817" y="853"/><use href="#k" x="832" y="853"/><use href="#x" x="847" y="853"/><use href="#f" x="862" y="853"/><use href="#f" x="877" y="853"/><use href="#f" x="892" y="853"/><use href="#k" x="907" y="853"/><use href="#x" x="922" y="853"/><use href="#k" x="937" y="853"/><use href="#x" x="952" y="853"/><use href="#k" x="967" y="853"/><use href="#x" x="982" y="853"/>
<path d="M985.500 844H992.500V846.500L990 849V864H988.500V849L985.500 846.500Z" fill="#555"/>
<circle cx="1586" cy="854" r="2.800" fill="none" stroke="#555" stroke-width="1.800"/><circle cx="1586" cy="854" r="4.600" fill="none" stroke="#555" stroke-width="1" stroke-dasharray="1.400 1"/>
</svg>
</body></html>
